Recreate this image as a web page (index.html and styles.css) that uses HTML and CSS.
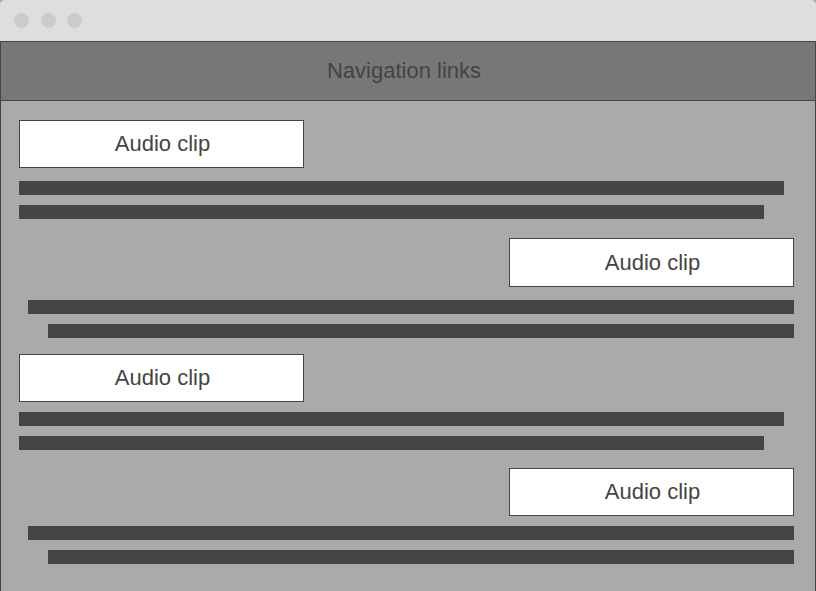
FILE: index.html
```html
<!DOCTYPE html>
<html>
<head>
<meta charset="utf-8">
<link rel="stylesheet" href="styles.css">
</head>
<body>
<div class="window">
  <div class="titlebar">
    <span class="dot"></span><span class="dot"></span><span class="dot"></span>
  </div>
  <div class="frame">
    <header class="nav">Navigation links</header>
    <main class="content">
      <section class="clip clip-left s1">
        <div class="box">Audio clip</div>
        <div class="bar long"></div>
        <div class="bar short"></div>
      </section>
      <section class="clip clip-right s2">
        <div class="box">Audio clip</div>
        <div class="bar long"></div>
        <div class="bar short"></div>
      </section>
      <section class="clip clip-left s3">
        <div class="box">Audio clip</div>
        <div class="bar long"></div>
        <div class="bar short"></div>
      </section>
      <section class="clip clip-right s4">
        <div class="box">Audio clip</div>
        <div class="bar long"></div>
        <div class="bar short"></div>
      </section>
    </main>
  </div>
</div>
</body>
</html>
```
FILE: styles.css
```css
html, body {
  margin: 0;
  padding: 0;
  background: #aaaaaa;
}
body {
  font-family: "Liberation Sans", Arial, sans-serif;
  width: 816px;
  height: 591px;
  overflow: hidden;
}
.window {
  width: 816px;
  height: 591px;
  display: flex;
  flex-direction: column;
}
.titlebar {
  height: 41px;
  flex: none;
  background: #dedede;
  border-radius: 5px 5px 0 0;
  display: flex;
  align-items: center;
  gap: 11.5px;
  padding-left: 14px;
  box-sizing: border-box;
}
.dot {
  width: 15px;
  height: 15px;
  border-radius: 50%;
  background: #cccccc;
}
.frame {
  flex: 1;
  border: 1px solid #444444;
  border-bottom: none;
  background: #aaaaaa;
  display: flex;
  flex-direction: column;
}
.nav {
  height: 58px;
  flex: none;
  background: #777777;
  border-bottom: 1px solid #444444;
  color: #444444;
  font-size: 22px;
  padding-right: 8px;
  display: flex;
  align-items: center;
  justify-content: center;
}
.content {
  padding: 19px 21px 0 18px;
  display: flex;
  flex-direction: column;
}
.clip {
  display: flex;
  flex-direction: column;
}
.clip-left { align-items: flex-start; }
.clip-right { align-items: flex-end; }
.box {
  width: 285px;
  height: 48px;
  box-sizing: border-box;
  background: #ffffff;
  border: 1px solid #444444;
  color: #444444;
  font-size: 22px;
  padding-left: 2px;
  display: flex;
  align-items: center;
  justify-content: center;
}
.bar {
  height: 14px;
  background: #444444;
  margin-top: 10px;
}
.clip-left .long { width: 765px; }
.clip-left .short { width: 745px; }
.clip-right .long { width: 766px; }
.clip-right .short { width: 746px; }
.s1 .box, .s2 .box { margin-bottom: 3px; }
.s2 .box { height: 49px; }
.s1 { margin-bottom: 19px; }
.s2 { margin-bottom: 16px; }
.s3 { margin-bottom: 18px; }
```
